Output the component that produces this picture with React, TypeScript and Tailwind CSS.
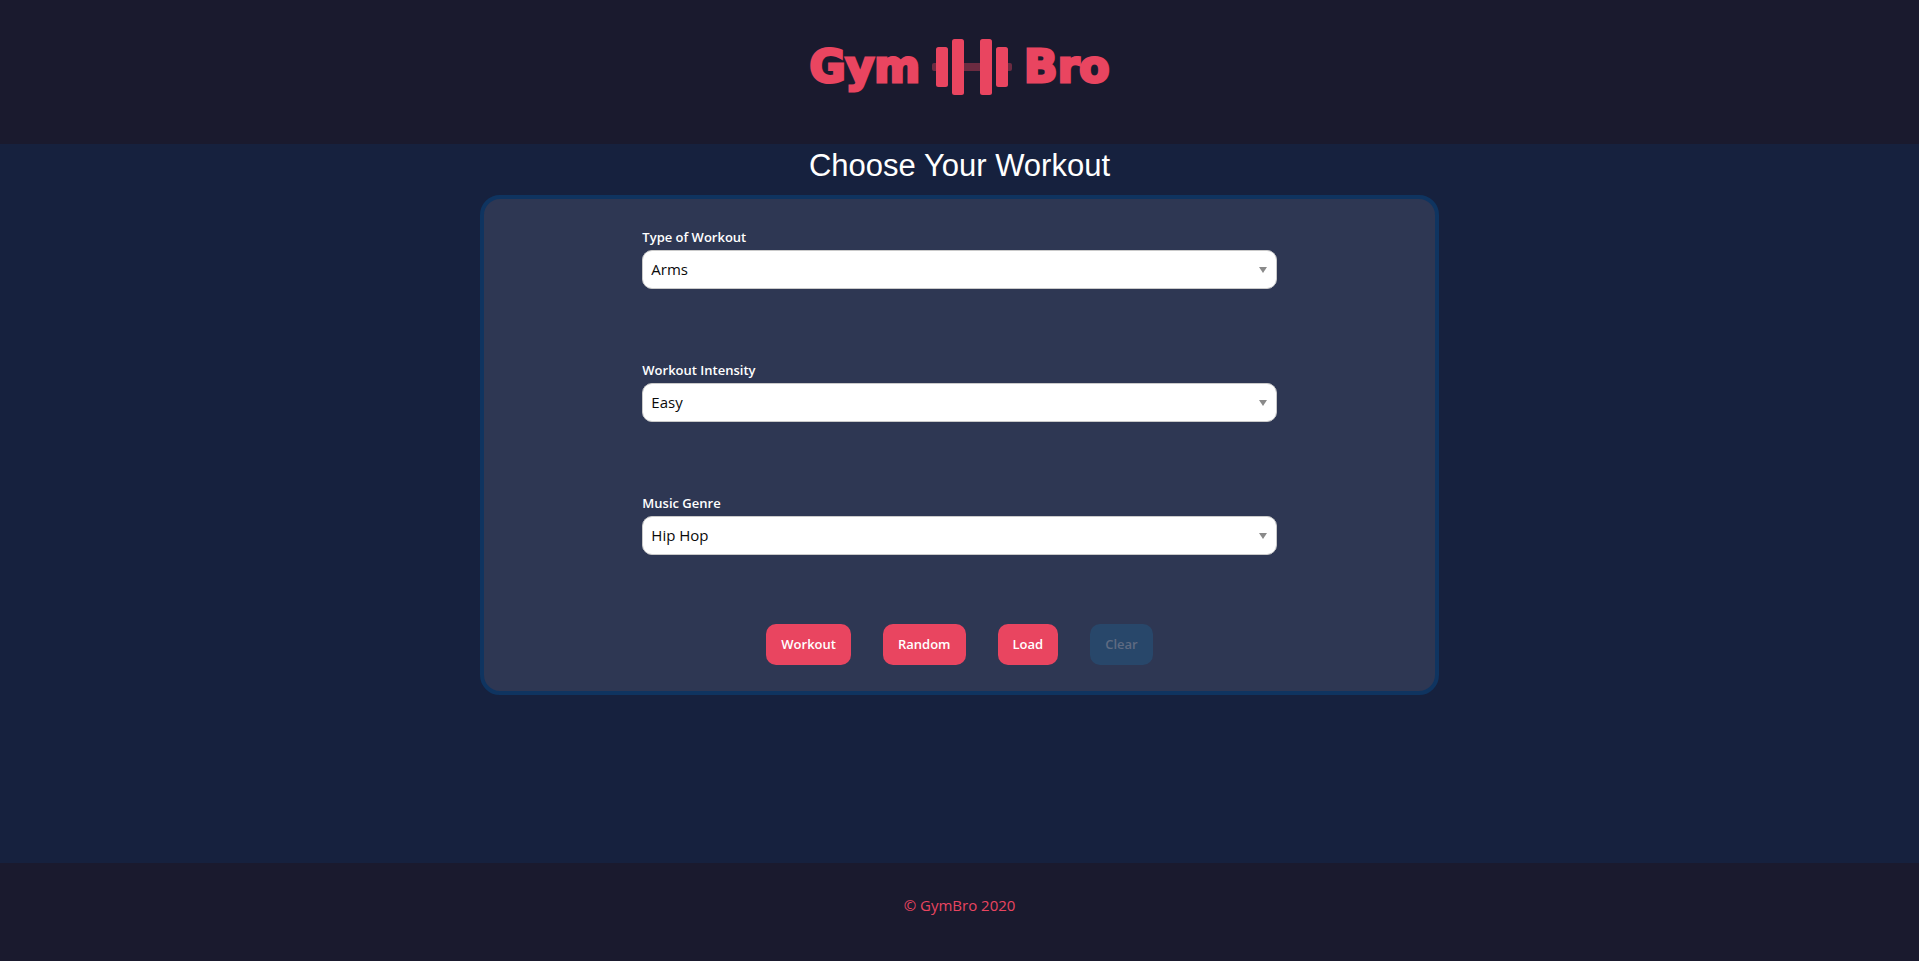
import React from "react";

const fields = [
  { id: "type", label: "Type of Workout", options: ["Arms", "Legs", "Chest", "Back"] },
  { id: "intensity", label: "Workout Intensity", options: ["Easy", "Medium", "Hard"] },
  { id: "genre", label: "Music Genre", options: ["Hip Hop", "Rock", "Pop"] },
];

function Dumbbell() {
  return (
    <svg viewBox="0 0 80 64" className="h-16 w-20" fill="#e94560" aria-hidden="true">
      <path
        d="M2 28h2v8h-2a2 2 0 0 1-2-2v-4a2 2 0 0 1 2-2zM32 28h16v8h-16zM76 28h2a2 2 0 0 1 2 2v4a2 2 0 0 1-2 2h-2z"
        fillOpacity="0.4"
        stroke="none"
      />
      <g stroke="none">
        <rect x="4" y="12" width="12" height="40" rx="2.5" />
        <rect x="20" y="4" width="12" height="56" rx="2.5" />
        <rect x="48" y="4" width="12" height="56" rx="2.5" />
        <rect x="64" y="12" width="12" height="40" rx="2.5" />
      </g>
    </svg>
  );
}

function Field({ id, label, options }: { id: string; label: string; options: string[] }) {
  return (
    <div className="mb-[72px] flex flex-col">
      <label htmlFor={id} className="mb-1 text-[13px] leading-[18px] font-semibold text-white">
        {label}
      </label>
      <div className="grid">
        <select
          id={id}
          className="col-start-1 row-start-1 h-[39px] w-full appearance-none rounded-[10px] border border-[#cacaca] bg-white px-2 text-[15px] text-[#0a0a0a]"
        >
          {options.map((option) => (
            <option key={option}>{option}</option>
          ))}
        </select>
        <svg
          viewBox="0 0 8 6"
          className="pointer-events-none col-start-1 row-start-1 mr-[10px] h-1.5 w-2 self-center justify-self-end"
          aria-hidden="true"
        >
          <path d="M0 0h8L4 6z" fill="#8a8a8a" />
        </svg>
      </div>
    </div>
  );
}

export default function App() {
  return (
    <div className="flex min-h-screen flex-col bg-[#16213e] font-['Open_Sans',sans-serif]">
      <header className="flex h-36 items-start justify-center bg-[#1a1a2e] pt-[34px]">
        <h1 className="flex items-center gap-3 font-['DejaVu_Sans',sans-serif] text-[44px] leading-[66px] font-bold text-[#e94560] [-webkit-text-stroke:3px_#e94560]">
          <span>Gym</span>
          <Dumbbell />
          <span>Bro</span>
        </h1>
      </header>

      <main className="flex flex-1 flex-col items-center">
        <h2 className="pt-0.5 pb-2.5 font-['Liberation_Sans',sans-serif] text-[31px] leading-[39px] text-white">
          Choose Your Workout
        </h2>
        <form
          className="w-1/2 rounded-[20px] border-4 border-[#0f3460] bg-[#2e3753] pt-[29px] pb-[26px]"
          onSubmit={(event) => event.preventDefault()}
        >
          <div className="mx-auto w-2/3">
            {fields.map((field) => (
              <Field key={field.id} {...field} />
            ))}
          </div>
          <div className="-mt-[3px] flex justify-center gap-8 text-[13px] font-semibold text-white">
            <button type="button" className="h-[41px] rounded-[10px] bg-[#e94560] px-[15px]">
              Workout
            </button>
            <button type="button" className="h-[41px] rounded-[10px] bg-[#e94560] px-[15px]">
              Random
            </button>
            <button type="button" className="h-[41px] rounded-[10px] bg-[#e94560] px-[15px]">
              Load
            </button>
            <button type="button" disabled className="h-[41px] rounded-[10px] bg-[#28476a] px-[15px] text-[#5f6b82]">
              Clear
            </button>
          </div>
        </form>
      </main>

      <footer className="flex h-[98px] justify-center bg-[#1a1a2e] pt-[30px] text-[15px] leading-6 text-[#e94560]">
        <p>© GymBro 2020</p>
      </footer>
    </div>
  );
}
